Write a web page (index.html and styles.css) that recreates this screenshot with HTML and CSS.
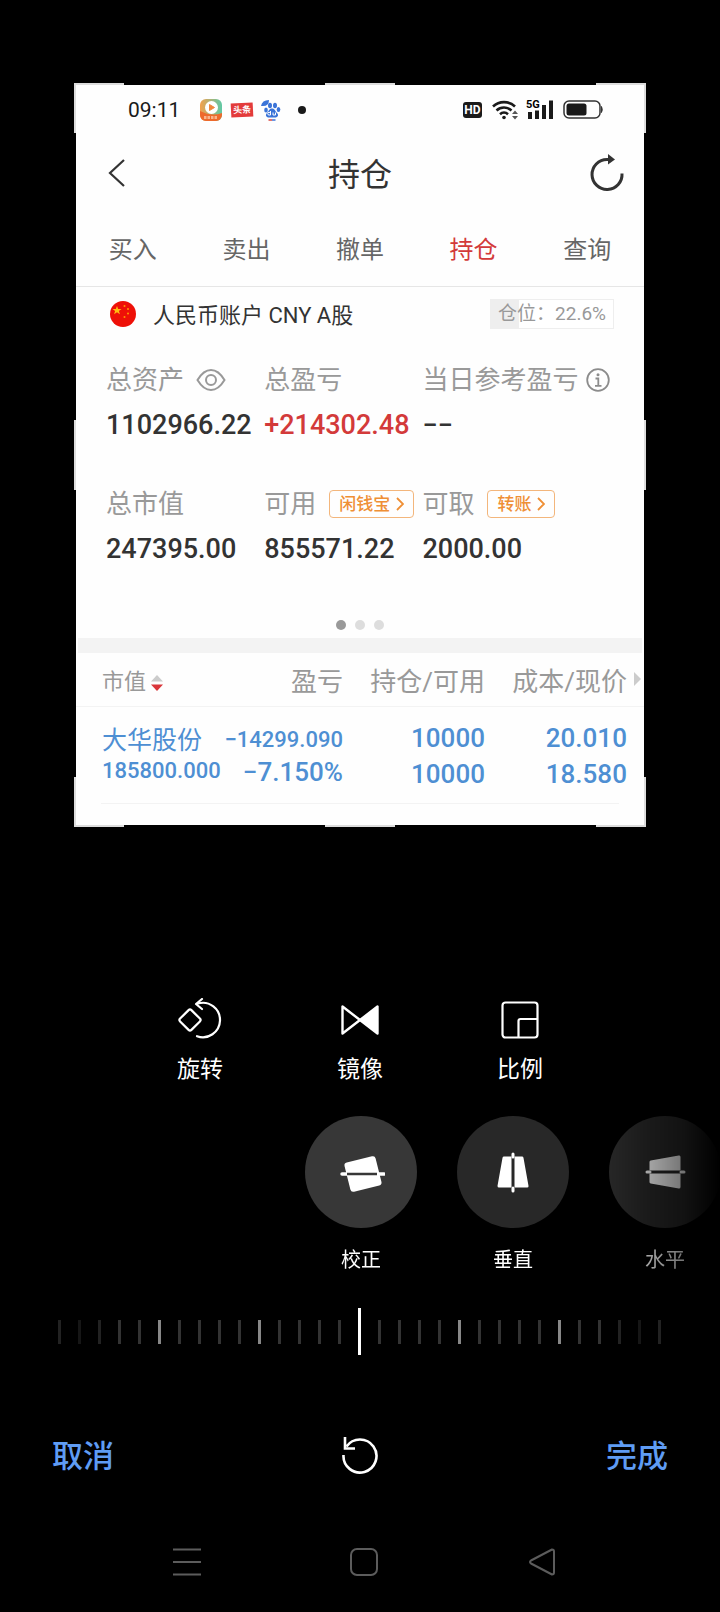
FILE: index.html
```html
<!DOCTYPE html>
<html lang="zh-CN">
<head>
    <meta charset="UTF-8">
    <meta name="viewport" content="width=device-width, initial-scale=1.0">
    <title>裁剪旋转</title>
    <link rel="stylesheet" href="styles.css">
</head>
<body>
    <main class="photo">
        <span class="handle top left"></span>
        <span class="handle top mid"></span>
        <span class="handle top right"></span>
        <span class="handle bottom left"></span>
        <span class="handle bottom mid"></span>
        <span class="handle bottom right"></span>
        <span class="side-handle left"></span>
        <span class="side-handle right"></span>

        <div class="status">
            <span class="clock">09:11</span>
            <svg class="app-icon" width="22" height="22" viewBox="0 0 22 22">
                <defs>
                    <linearGradient id="play" x1="0" y1="0" x2="1" y2="0">
                        <stop offset="0" stop-color="#f4a04c"/>
                        <stop offset="1" stop-color="#5fc9a6"/>
                    </linearGradient>
                </defs>
                <rect width="22" height="22" rx="6" fill="url(#play)"/>
                <path d="M0 12q11 6 22 2v2a6 6 0 0 1-6 6H6a6 6 0 0 1-6-6z" fill="#ee6a2c"/>
                <circle cx="11.500" cy="8.500" r="6.500" fill="#fff"/>
                <path d="M9.500 5.500l5 3-5 3z" fill="#f0873c" stroke="#f0873c" stroke-linejoin="round"/>
                <path d="M4 18.500h14" stroke="#f9b48c" stroke-width="3" stroke-dasharray="2.500 1"/>
            </svg>
            <span class="news-icon">头条</span>
            <svg class="paw-icon" width="20" height="22" viewBox="0 0 20 22" fill="#3b74d8">
                <path d="M0 7Q1 1 8 1 8 7 2 7z"/>
                <ellipse cx="9" cy="6.500" rx="2" ry="2.800"/>
                <ellipse cx="14" cy="6.500" rx="2" ry="2.800"/>
                <ellipse cx="5" cy="11" rx="1.800" ry="2.500"/>
                <ellipse cx="17.500" cy="10.500" rx="1.800" ry="2.500"/>
                <path d="M11 9.500c3 0 3 2.500 5 4.500s1 4.500-2 4.500H8c-3 0-4-2.500-2-4.500s2-4.500 5-4.500z"/>
                <path d="M9.500 12v4H8a1.300 1.300 0 0 1 0-2.600h1.500M12 13.500V16h2.500v-2.500" fill="none" stroke="#fff"/>
                <path d="M7.500 21h3.500" stroke="#d8433c" stroke-width="1.500"/>
                <path d="M11 21h3.500" stroke="#3b74d8" stroke-width="1.500"/>
            </svg>
            <span class="notice-dot"></span>
            <span class="hd">HD</span>
            <svg class="wifi" width="27" height="22" viewBox="0 0 27 22" fill="none" stroke="#1a1a1a" stroke-width="2.600">
                <path d="M1 7.500a16 16 0 0 1 22 0M4.500 11.500a11 11 0 0 1 15 0M8 15.200a6 6 0 0 1 8 0"/>
                <circle cx="12" cy="18.500" r="1.800" fill="#1a1a1a" stroke="none"/>
                <path d="M20 15l3-3.500 3 3.500zM20 17l3 3.500 3-3.500z" fill="#555" stroke="none"/>
            </svg>
            <svg class="signal" width="28" height="22" viewBox="0 0 28 22">
                <text x="0" y="9" class="signal-text">5G</text>
                <path d="M4 13v7M11 11.500v8.500M18 6v14M25 1.500V20" stroke="#1a1a1a" stroke-width="4"/>
            </svg>
            <svg class="battery" width="40" height="20" viewBox="0 0 40 20">
                <rect x="1" y="1" width="36" height="17" rx="5" fill="none" stroke="#333" stroke-width="1.500"/>
                <rect x="3.500" y="3.500" width="20" height="12" rx="2.500" fill="#1a1a1a"/>
                <path d="M38.500 6.500q1.500 3 0 6z" fill="#333" stroke="#333"/>
            </svg>
        </div>

        <header class="title-bar">
            <button class="icon-button back" aria-label="返回">
                <svg width="18" height="30" viewBox="0 0 18 30" fill="none" stroke="#333" stroke-width="2.200">
                    <path d="M16 2L2 15l14 13"/>
                </svg>
            </button>
            <h1>持仓</h1>
            <button class="icon-button refresh" aria-label="刷新">
                <svg width="34" height="38" viewBox="0 0 34 38" fill="none" stroke="#333" stroke-width="3">
                    <path d="M32 19.500A15 15 0 1 1 17 5.500h2"/>
                    <path d="M18 0l7 5.500-7 5z" fill="#333" stroke="none"/>
                </svg>
            </button>
        </header>

        <nav class="tabs">
            <a href="#">买入</a>
            <a href="#">卖出</a>
            <a href="#">撤单</a>
            <a href="#" class="active">持仓</a>
            <a href="#">查询</a>
        </nav>

        <div class="account">
            <svg width="26" height="26" viewBox="0 0 26 26">
                <circle cx="13" cy="13" r="13" fill="#ee1008"/>
                <path d="M7 5l1.200 3H11.500L8.900 10l1 3.200L7 11.300 4.100 13.200 5.100 10 2.500 8h3.300z" fill="#fb1"/>
                <g fill="#f90"><circle cx="14.500" cy="5" r="1"/><circle cx="18" cy="8" r="1"/><circle cx="18" cy="12.500" r="1"/><circle cx="14.500" cy="16" r="1"/></g>
            </svg>
            <span class="account-name">人民币账户 CNY A股</span>
            <span class="position">仓位：22.6%</span>
        </div>

        <section class="stats">
            <div class="stat">
                <div class="label">总资产
                    <svg class="eye" width="30" height="24" viewBox="0 0 30 24" fill="none" stroke="#999" stroke-width="2">
                        <path d="M1.500 12C6 4.500 10 2 15 2s9 2.500 13.500 10C24 19.500 20 22 15 22S6 19.500 1.500 12z"/>
                        <circle cx="15" cy="12" r="5"/>
                    </svg>
                </div>
                <div class="value">1102966.22</div>
            </div>
            <div class="stat">
                <div class="label">总盈亏</div>
                <div class="value profit">+214302.48</div>
            </div>
            <div class="stat">
                <div class="label">当日参考盈亏
                    <svg class="info" width="24" height="24" viewBox="0 0 24 24" fill="none" stroke="#8c8c8c" stroke-width="1.800">
                        <circle cx="12" cy="12" r="10.800"/>
                        <path d="M9.500 10.500h2.800v7M9 17.800h6.500" />
                        <circle cx="12" cy="6.800" r="1.500" fill="#8c8c8c" stroke="none"/>
                    </svg>
                </div>
                <div class="value">−−</div>
            </div>
            <div class="stat">
                <div class="label">总市值</div>
                <div class="value">247395.00</div>
            </div>
            <div class="stat">
                <div class="label">可用
                    <button class="tag">闲钱宝
                        <svg width="8" height="14" viewBox="0 0 8 14" fill="none" stroke="#ef8f35" stroke-width="1.800"><path d="M1 1l6 6-6 6"/></svg>
                    </button>
                </div>
                <div class="value">855571.22</div>
            </div>
            <div class="stat">
                <div class="label">可取
                    <button class="tag">转账
                        <svg width="8" height="14" viewBox="0 0 8 14" fill="none" stroke="#ef8f35" stroke-width="1.800"><path d="M1 1l6 6-6 6"/></svg>
                    </button>
                </div>
                <div class="value">2000.00</div>
            </div>
        </section>

        <div class="pager">
            <span class="current"></span>
            <span></span>
            <span></span>
        </div>

        <div class="divider"></div>

        <table class="holdings">
            <thead>
                <tr>
                    <th class="col-name">市值
                        <svg width="12" height="18" viewBox="0 0 12 18"><path d="M0 7.500L6 1l6 6.500z" fill="#ccc"/><path d="M0 10.500L6 17l6-6.500z" fill="#d9363a"/></svg>
                    </th>
                    <th class="col-profit">盈亏</th>
                    <th class="col-amount">持仓/可用</th>
                    <th class="col-price">成本/现价</th>
                    <th class="col-more"><svg width="7" height="14" viewBox="0 0 7 14"><path d="M0 0l7 7-7 7z" fill="#ccc"/></svg></th>
                </tr>
            </thead>
            <tbody>
                <tr>
                    <td class="col-name"><span class="stock">大华股份</span><span class="small">185800.000</span></td>
                    <td class="col-profit"><span class="small">−14299.090</span><span>−7.150%</span></td>
                    <td class="col-amount"><span>10000</span><span>10000</span></td>
                    <td class="col-price"><span>20.010</span><span>18.580</span></td>
                    <td class="col-more"></td>
                </tr>
            </tbody>
        </table>
        <div class="row-line"></div>
    </main>

    <div class="tools">
        <button class="tool">
            <svg width="44" height="44" viewBox="2 0 44 44" fill="none" stroke="#fff" stroke-width="2.200" stroke-linecap="round" stroke-linejoin="round">
                <rect x="6" y="14" width="16" height="16" rx="2" transform="rotate(45 14 22)"/>
                <path d="M21 38.200A17.200 17.200 0 1 0 22 5.500M26 1l-6 5 6 5"/>
            </svg>
            <span>旋转</span>
        </button>
        <button class="tool">
            <svg width="44" height="44" viewBox="0 0 44 44" fill="none" stroke="#fff" stroke-width="2.400" stroke-linejoin="round">
                <path d="M4.500 8.500v27L22 22z"/>
                <path d="M39.500 8.500v27L22 22z" fill="#fff"/>
            </svg>
            <span>镜像</span>
        </button>
        <button class="tool">
            <svg width="44" height="44" viewBox="0 0 44 44" fill="none" stroke="#fff" stroke-width="2.200">
                <rect x="4.500" y="4.500" width="35" height="35" rx="3"/>
                <path d="M20.500 39V23a2 2 0 0 1 2-2H39"/>
            </svg>
            <span>比例</span>
        </button>
    </div>

    <div class="dials">
        <button class="dial selected">
            <span class="disc">
                <svg width="48" height="48" viewBox="0 0 48 48">
                    <rect x="10" y="11" width="32" height="30" rx="3" fill="#fff" transform="rotate(-14 26 26)"/>
                    <path d="M5 26h42" stroke="#fff" stroke-width="3.500" stroke-linecap="round"/>
                    <path d="M10 26h30" stroke="#373737" stroke-width="2.500"/>
                </svg>
            </span>
            <span>校正</span>
        </button>
        <button class="dial">
            <span class="disc">
                <svg width="48" height="48" viewBox="0 0 48 48">
                    <path d="M15 10h18l5 28H10z" fill="#fff" stroke="#fff" stroke-width="3" stroke-linejoin="round"/>
                    <path d="M24 8v32" stroke="#282828" stroke-width="3"/>
                    <path d="M24 6v3M24 40v3" stroke="#fff" stroke-width="3" stroke-linecap="round"/>
                </svg>
            </span>
            <span>垂直</span>
        </button>
        <button class="dial">
            <span class="disc">
                <svg width="48" height="48" viewBox="0 0 48 48">
                    <path d="M38 9v30l-28-5V14z" fill="#fff" stroke="#fff" stroke-width="3" stroke-linejoin="round"/>
                    <path d="M8 24h32" stroke="#282828" stroke-width="3"/>
                    <path d="M6 24h3M40 24h3" stroke="#fff" stroke-width="3" stroke-linecap="round"/>
                </svg>
            </span>
            <span>水平</span>
        </button>
    </div>

    <div class="ruler">
        <div class="ticks">
            <i class="dim"></i><i class="faint"></i><i class="dim"></i><i></i><i></i>
            <i class="major"></i><i></i><i></i><i></i><i></i>
            <i class="major"></i><i></i><i></i><i></i><i></i>
            <i></i><i></i><i></i><i></i><i></i>
            <i class="major"></i><i></i><i></i><i></i><i></i>
            <i class="major"></i><i></i><i></i><i class="dim"></i><i class="faint"></i>
            <i class="dim"></i>
        </div>
        <input type="range" min="-45" max="45" value="0" aria-label="校正角度">
    </div>

    <div class="actions">
        <button class="action">取消</button>
        <button class="icon-button" aria-label="还原">
            <svg width="40" height="40" viewBox="0 0 40 40" fill="none" stroke="#fff" stroke-width="2.600">
                <path d="M3.500 20A16.500 16.500 0 1 0 6.500 11.500M5 2v11.500h10"/>
            </svg>
        </button>
        <button class="action">完成</button>
    </div>

    <nav class="system-nav">
        <button class="icon-button" aria-label="最近任务">
            <svg width="28" height="28" viewBox="0 0 28 28" stroke="#5c5c5c" stroke-width="2"><path d="M0 1.500h28M0 14h28M0 26.500h28"/></svg>
        </button>
        <button class="icon-button" aria-label="主屏幕">
            <svg width="28" height="28" viewBox="0 0 28 28" fill="none" stroke="#5c5c5c" stroke-width="2"><rect x="1" y="1" width="26" height="26" rx="6"/></svg>
        </button>
        <button class="icon-button" aria-label="返回上一页">
            <svg width="28" height="28" viewBox="0 0 28 28" fill="none" stroke="#5c5c5c" stroke-width="2" stroke-linejoin="round"><path d="M24 1.500L3 12.500q-2 1.500 0 3L24 26.500q2 0 2-2v-21q0-2-2-2z"/></svg>
        </button>
    </nav>
</body>
</html>
```
FILE: styles.css
```css
* {
    box-sizing: border-box;
}
body {
    margin: 0;
    background-color: #000;
    color: #fff;
    font-family: Roboto, 'Noto Sans CJK SC', sans-serif;
}
button {
    background: none;
    border: none;
    padding: 0;
    color: inherit;
    font-family: inherit;
    cursor: pointer;
}
svg {
    display: block;
    flex-shrink: 0;
}
.icon-button {
    display: flex;
    align-items: center;
    justify-content: center;
}

/* cropped picture */
.photo {
    position: relative;
    margin: 85px 76px 0;
    padding-bottom: 21px;
    background-color: #fefefe;
    color: #333;
}
.handle {
    position: absolute;
    width: 50px;
    height: 50px;
    border: 0 solid #ddd;
}
.handle.top { top: -2px; border-top-width: 2px; }
.handle.bottom { bottom: -2px; border-bottom-width: 2px; }
.handle.left { left: -2px; border-left-width: 2px; }
.handle.right { right: -2px; border-right-width: 2px; }
.handle.mid {
    left: calc(50% - 35px);
    width: 70px;
}
.side-handle {
    position: absolute;
    top: calc(50% - 35px);
    width: 2px;
    height: 70px;
    background-color: #ddd;
}
.side-handle.left { left: -2px; }
.side-handle.right { right: -2px; }

/* status bar */
.status {
    display: flex;
    align-items: center;
    height: 50px;
    padding: 0 41px 0 52px;
    color: #1a1a1a;
}
.clock {
    width: 72px;
    font-size: 21px;
}
.news-icon {
    margin: 0 8px 0 9px;
    width: 22px;
    background-color: #e33b3b;
    color: #fff;
    font-size: 9px;
    font-weight: bold;
    line-height: 14px;
    text-align: center;
    transform: rotate(-3deg);
}
.notice-dot {
    width: 8px;
    height: 8px;
    margin: 0 auto 0 17px;
    border-radius: 50%;
    background-color: #1a1a1a;
}
.hd {
    width: 19px;
    border-radius: 3px;
    background-color: #1a1a1a;
    color: #fff;
    font-size: 12px;
    font-weight: bold;
    line-height: 16px;
    text-align: center;
}
.wifi {
    margin: 0 7px 0 10px;
}
.signal {
    margin-right: 9px;
}
.signal-text {
    font-size: 11px;
    font-weight: bold;
}

/* title and tabs */
.title-bar {
    display: grid;
    grid-template-columns: 1fr auto 1fr;
    align-items: center;
    height: 76px;
    padding: 0 20px 0 32px;
}
.title-bar h1 {
    margin: 0;
    padding: 4px 12px 0 0;
    font-size: 32px;
    font-weight: normal;
    line-height: 48px;
}
.back {
    justify-self: start;
}
.refresh {
    justify-self: end;
}
.tabs {
    display: flex;
    padding-top: 3px;
    border-bottom: 1px solid #e6e6e6;
}
.tabs a {
    flex: 1;
    color: #666;
    font-size: 24px;
    line-height: 72px;
    text-align: center;
    text-decoration: none;
}
.tabs a.active {
    color: #d33a3a;
}

/* account */
.account {
    display: flex;
    align-items: center;
    height: 54px;
    padding: 0 30px 0 34px;
}
.account-name {
    margin-left: 17px;
    padding-bottom: 3px;
    font-size: 22px;
}
.position {
    margin-left: auto;
    padding: 0 7px;
    border: 1px solid #eee;
    background: linear-gradient(to right, #eee 22.6%, #fff 22.6%);
    color: #999;
    font-size: 19px;
    line-height: 28px;
}
.stats {
    display: grid;
    grid-template-columns: 5fr 5fr 7fr;
    row-gap: 34px;
    padding: 19px 0 0 30px;
}
.label {
    display: flex;
    align-items: center;
    height: 40px;
    color: #999;
    font-size: 26px;
    line-height: 38px;
    white-space: nowrap;
}
.eye {
    margin-left: 12px;
}
.info {
    margin-left: 8px;
}
.value {
    font-size: 27px;
    font-weight: 500;
    line-height: 50px;
}
.profit {
    color: #d33a3a;
}
.tag {
    display: flex;
    align-items: center;
    gap: 6px;
    height: 28px;
    margin-left: 13px;
    padding: 0 9px;
    border: 1px solid #f3b67c;
    border-radius: 4px;
    color: #ef8f35;
    font-size: 17px;
    font-weight: 500;
    line-height: 24px;
}
.pager {
    display: flex;
    justify-content: center;
    gap: 9px;
    padding: 46px 0 8px;
}
.pager span {
    width: 10px;
    height: 10px;
    border-radius: 50%;
    background-color: #ddd;
}
.pager .current {
    background-color: #999;
}
.divider {
    height: 15px;
    margin: 0 2px;
    background-color: #f3f3f3;
}

/* holdings */
.holdings {
    width: 100%;
    border-collapse: collapse;
    table-layout: fixed;
}
.holdings th {
    height: 53px;
    padding: 0;
    border-bottom: 1px solid #f3f3f3;
    color: #999;
    font-size: 26px;
    font-weight: normal;
    text-align: right;
}
.holdings td {
    height: 97px;
    padding: 2px 0 0;
    color: #4e8fd3;
    font-size: 26px;
    font-weight: 500;
    text-align: right;
}
.holdings td span {
    display: block;
}
.holdings .col-name {
    width: 28%;
    padding-left: 26px;
    text-align: left;
}
.holdings .col-profit { width: 19%; }
.holdings .col-amount { width: 25%; }
.holdings .col-price { width: 25%; }
.holdings .col-more { padding-left: 7px; }
.holdings th.col-name {
    font-size: 22px;
}
th.col-name svg {
    display: inline-block;
    vertical-align: middle;
}
td.col-name { line-height: 30px; }
td.col-profit { line-height: 33px; white-space: nowrap; }
td.col-amount,
td.col-price { line-height: 36px; }
.holdings .stock {
    font-size: 25px;
    font-weight: normal;
}
.holdings .small {
    font-size: 22px;
}
td.col-profit span {
    margin-left: -30px;
}
.row-line {
    height: 1px;
    margin: 0 25px;
    background-color: #f3f3f3;
}

/* editor tools */
.tools {
    display: flex;
    justify-content: center;
    gap: 100px;
    margin-top: 173px;
}
.tool {
    display: flex;
    flex-direction: column;
    align-items: center;
    gap: 12px;
    width: 60px;
    font-size: 23px;
    line-height: 32px;
}
.dials {
    display: flex;
    gap: 40px;
    margin-top: 30px;
    padding-left: calc(50% - 55px);
    overflow: hidden;
    -webkit-mask-image: linear-gradient(to right, #000 84%, rgba(0, 0, 0, 0.65) 90%, rgba(0, 0, 0, 0.45) 95%, transparent 100%);
    mask-image: linear-gradient(to right, #000 84%, rgba(0, 0, 0, 0.65) 90%, rgba(0, 0, 0, 0.45) 95%, transparent 100%);
}
.dial {
    display: flex;
    flex-direction: column;
    flex-shrink: 0;
    align-items: center;
    gap: 16px;
    font-size: 20px;
    line-height: 32px;
}
.disc {
    display: flex;
    align-items: center;
    justify-content: center;
    width: 112px;
    height: 112px;
    border-radius: 50%;
    background-color: #282828;
}
.selected .disc {
    background-color: #373737;
}

/* angle ruler */
.ruler {
    display: grid;
    align-items: center;
    margin: 32px 59px 0 58px;
}
.ticks,
.ruler input {
    grid-area: 1 / 1;
}
.ticks {
    display: flex;
    justify-content: space-between;
}
.ticks i {
    width: 3px;
    height: 24px;
    background-color: #333;
}
.ticks .major { background-color: #888; }
.ticks .dim { background-color: #222; }
.ticks .faint { background-color: #161616; }
.ruler input {
    -webkit-appearance: none;
    appearance: none;
    width: 100%;
    height: 47px;
    margin: 0;
    background: none;
}
.ruler input::-webkit-slider-thumb {
    -webkit-appearance: none;
    width: 3px;
    height: 47px;
    background-color: #fff;
}

.actions {
    display: flex;
    justify-content: space-between;
    align-items: center;
    margin-top: 76px;
    padding: 0 52px;
}
.action {
    padding-top: 3px;
    color: #5f9cf4;
    font-size: 31px;
    font-weight: 500;
    line-height: 45px;
}
.system-nav {
    display: grid;
    grid-template-columns: repeat(3, 1fr);
    margin-top: 61px;
    padding: 8px 89px 35px 98px;
}
```
